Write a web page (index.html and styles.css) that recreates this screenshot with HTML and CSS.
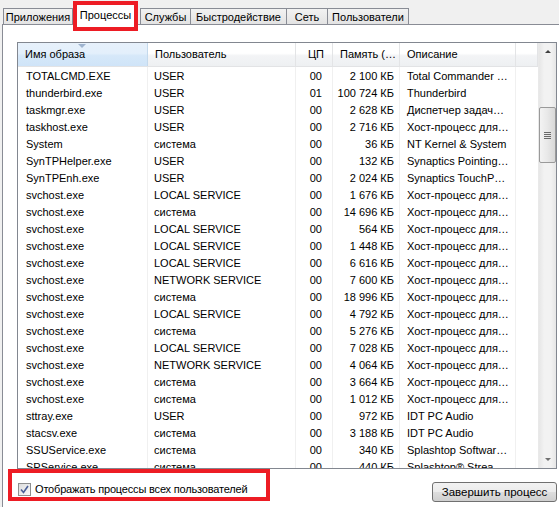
FILE: index.html
```html
<!DOCTYPE html>
<html lang="ru">
<head>
<meta charset="utf-8">
<link rel="stylesheet" href="styles.css">
</head>
<body>
<div class="window">
  <div class="tabs">
    <div class="tab t-apps">Приложения</div>
    <div class="tab active">Процессы<span class="mark mark-tab"></span></div>
    <div class="tab t-svc">Службы</div>
    <div class="tab t-perf">Быстродействие</div>
    <div class="tab t-net">Сеть</div>
    <div class="tab t-users">Пользователи</div>
  </div>
  <div class="panel">
    <div class="listbox">
      <div class="list-main">
        <div class="header">
          <div class="hcell c1 sorted"><span class="sort-arrow"></span>Имя образа</div>
          <div class="hcell c2">Пользователь</div>
          <div class="hcell c3 right">ЦП</div>
          <div class="hcell c4">Память (…</div>
          <div class="hcell c5">Описание</div>
          <div class="hcell c6"></div>
        </div>
        <div class="rows">
          <div class="row"><span class="c1">TOTALCMD.EXE</span><span class="c2">USER</span><span class="c3">00</span><span class="c4">2 100 КБ</span><span class="c5">Total Commander …</span><span class="c6"></span></div>
          <div class="row"><span class="c1">thunderbird.exe</span><span class="c2">USER</span><span class="c3">01</span><span class="c4">100 724 КБ</span><span class="c5">Thunderbird</span><span class="c6"></span></div>
          <div class="row"><span class="c1">taskmgr.exe</span><span class="c2">USER</span><span class="c3">00</span><span class="c4">2 628 КБ</span><span class="c5">Диспетчер задач…</span><span class="c6"></span></div>
          <div class="row"><span class="c1">taskhost.exe</span><span class="c2">USER</span><span class="c3">00</span><span class="c4">2 716 КБ</span><span class="c5">Хост-процесс для…</span><span class="c6"></span></div>
          <div class="row"><span class="c1">System</span><span class="c2">система</span><span class="c3">00</span><span class="c4">36 КБ</span><span class="c5">NT Kernel &amp; System</span><span class="c6"></span></div>
          <div class="row"><span class="c1">SynTPHelper.exe</span><span class="c2">USER</span><span class="c3">00</span><span class="c4">132 КБ</span><span class="c5">Synaptics Pointing…</span><span class="c6"></span></div>
          <div class="row"><span class="c1">SynTPEnh.exe</span><span class="c2">USER</span><span class="c3">00</span><span class="c4">2 024 КБ</span><span class="c5">Synaptics TouchP…</span><span class="c6"></span></div>
          <div class="row"><span class="c1">svchost.exe</span><span class="c2">LOCAL SERVICE</span><span class="c3">00</span><span class="c4">1 676 КБ</span><span class="c5">Хост-процесс для…</span><span class="c6"></span></div>
          <div class="row"><span class="c1">svchost.exe</span><span class="c2">система</span><span class="c3">00</span><span class="c4">14 696 КБ</span><span class="c5">Хост-процесс для…</span><span class="c6"></span></div>
          <div class="row"><span class="c1">svchost.exe</span><span class="c2">LOCAL SERVICE</span><span class="c3">00</span><span class="c4">564 КБ</span><span class="c5">Хост-процесс для…</span><span class="c6"></span></div>
          <div class="row"><span class="c1">svchost.exe</span><span class="c2">LOCAL SERVICE</span><span class="c3">00</span><span class="c4">1 448 КБ</span><span class="c5">Хост-процесс для…</span><span class="c6"></span></div>
          <div class="row"><span class="c1">svchost.exe</span><span class="c2">LOCAL SERVICE</span><span class="c3">00</span><span class="c4">6 616 КБ</span><span class="c5">Хост-процесс для…</span><span class="c6"></span></div>
          <div class="row"><span class="c1">svchost.exe</span><span class="c2">NETWORK SERVICE</span><span class="c3">00</span><span class="c4">7 600 КБ</span><span class="c5">Хост-процесс для…</span><span class="c6"></span></div>
          <div class="row"><span class="c1">svchost.exe</span><span class="c2">система</span><span class="c3">00</span><span class="c4">18 996 КБ</span><span class="c5">Хост-процесс для…</span><span class="c6"></span></div>
          <div class="row"><span class="c1">svchost.exe</span><span class="c2">LOCAL SERVICE</span><span class="c3">00</span><span class="c4">4 792 КБ</span><span class="c5">Хост-процесс для…</span><span class="c6"></span></div>
          <div class="row"><span class="c1">svchost.exe</span><span class="c2">система</span><span class="c3">00</span><span class="c4">5 276 КБ</span><span class="c5">Хост-процесс для…</span><span class="c6"></span></div>
          <div class="row"><span class="c1">svchost.exe</span><span class="c2">LOCAL SERVICE</span><span class="c3">00</span><span class="c4">7 028 КБ</span><span class="c5">Хост-процесс для…</span><span class="c6"></span></div>
          <div class="row"><span class="c1">svchost.exe</span><span class="c2">NETWORK SERVICE</span><span class="c3">00</span><span class="c4">4 064 КБ</span><span class="c5">Хост-процесс для…</span><span class="c6"></span></div>
          <div class="row"><span class="c1">svchost.exe</span><span class="c2">система</span><span class="c3">00</span><span class="c4">3 664 КБ</span><span class="c5">Хост-процесс для…</span><span class="c6"></span></div>
          <div class="row"><span class="c1">svchost.exe</span><span class="c2">система</span><span class="c3">00</span><span class="c4">1 012 КБ</span><span class="c5">Хост-процесс для…</span><span class="c6"></span></div>
          <div class="row"><span class="c1">sttray.exe</span><span class="c2">USER</span><span class="c3">00</span><span class="c4">972 КБ</span><span class="c5">IDT PC Audio</span><span class="c6"></span></div>
          <div class="row"><span class="c1">stacsv.exe</span><span class="c2">система</span><span class="c3">00</span><span class="c4">3 188 КБ</span><span class="c5">IDT PC Audio</span><span class="c6"></span></div>
          <div class="row"><span class="c1">SSUService.exe</span><span class="c2">система</span><span class="c3">00</span><span class="c4">340 КБ</span><span class="c5">Splashtop Softwar…</span><span class="c6"></span></div>
          <div class="row"><span class="c1">SPService.exe</span><span class="c2">система</span><span class="c3">00</span><span class="c4">440 КБ</span><span class="c5">Splashtop® Strea…</span><span class="c6"></span></div>
        </div>
      </div>
      <div class="scrollbar">
        <div class="sb-btn"><span class="tri-up"></span></div>
        <div class="sb-track">
          <div class="sb-thumb"><span class="grip"></span></div>
        </div>
        <div class="sb-btn"><span class="tri-down"></span></div>
      </div>
    </div>
    <div class="footer">
      <label class="check">
        <span class="box"><svg width="9" height="9" viewBox="0 0 9 9"><path d="M1 4.5 L3.5 7.5 L8 1" fill="none" stroke="#4a5f97" stroke-width="1.6"/></svg></span>
        Отображать процессы всех пользователей
      </label>
      <button class="btn">Завершить процесс</button>
    </div>
  </div>
  <div class="mark mark-check"></div>
</div>
</body>
</html>
```

FILE: styles.css
```css
html, body {
  margin: 0;
  padding: 0;
}
body {
  background: #f0f0f0;
  font-family: "Liberation Sans", Arial, sans-serif;
  font-size: 11px;
  color: #000;
  overflow: hidden;
  width: 559px;
  height: 507px;
}
.window {
  position: relative;
  width: 559px;
  height: 507px;
  overflow: hidden;
}
.tabs {
  display: flex;
  align-items: flex-end;
  height: 24px;
  padding-left: 3px;
  position: relative;
  z-index: 2;
}
.tab {
  height: 16px;
  line-height: 16px;
  padding: 0;
  margin-right: -1px;
  border: 1px solid #898c95;
  border-bottom: none;
  background: linear-gradient(#f2f2f2, #e3e3e3);
  font-size: 11px;
  white-space: nowrap;
  text-align: center;
  box-sizing: border-box;
}
.t-apps { width: 70px; }
.t-svc { width: 51px; }
.t-perf { width: 97px; }
.t-net { width: 42px; }
.t-users { width: 82px; }
.tab.active {
  width: 63px;
  height: 21px;
  line-height: 20px;
  background: #fff;
  margin: 0 3px -1px 2px;
  position: relative;
  z-index: 3;
}
.panel {
  background: #fff;
  border: 1px solid #898c95;
  margin-left: 2px;
  width: 600px;
  height: 520px;
  padding: 17px 0 0 14px;
  box-sizing: border-box;
}
.listbox {
  display: flex;
  width: 540px;
  height: 427px;
  border: 1px solid #828790;
  box-sizing: border-box;
  overflow: hidden;
}
.list-main {
  width: 520px;
  overflow: hidden;
}
.header {
  display: flex;
  height: 23px;
  background: linear-gradient(#ffffff 0%, #ffffff 45%, #f3f4f6 55%, #eef0f2 100%);
  border-bottom: 1px solid #e2e3e5;
}
.hcell {
  line-height: 23px;
  padding-left: 7px;
  box-sizing: border-box;
  border-right: 1px solid #e3e4e6;
  white-space: nowrap;
  overflow: hidden;
  position: relative;
}
.hcell.right {
  text-align: right;
  padding-left: 0;
  padding-right: 8px;
}
.hcell.sorted {
  background: linear-gradient(#e7f1fb 0%, #e3effb 45%, #d6e8f9 55%, #cfe4f8 100%);
  border-right-color: #c4d9ec;
}
.sort-arrow {
  position: absolute;
  left: 60px;
  top: 1px;
  width: 0;
  height: 0;
  border-left: 4px solid transparent;
  border-right: 4px solid transparent;
  border-top: 4px solid #9fb4cf;
}
.c1 { width: 130px; }
.c2 { width: 148px; }
.c3 { width: 37px; }
.c4 { width: 67px; }
.c5 { width: 116px; }
.c6 { width: 22px; }
.rows {
  padding-top: 1px;
  background:
    linear-gradient(#f0f0f0, #f0f0f0) 129px 0 / 1px 100% no-repeat,
    linear-gradient(#f0f0f0, #f0f0f0) 277px 0 / 1px 100% no-repeat,
    linear-gradient(#f0f0f0, #f0f0f0) 314px 0 / 1px 100% no-repeat,
    linear-gradient(#f0f0f0, #f0f0f0) 381px 0 / 1px 100% no-repeat,
    linear-gradient(#f0f0f0, #f0f0f0) 497px 0 / 1px 100% no-repeat;
}
.row {
  display: flex;
  height: 17px;
  line-height: 17px;
}
.row span {
  display: block;
  box-sizing: border-box;
  white-space: nowrap;
  overflow: hidden;
}
.row .c1 { padding-left: 8px; }
.row .c2 { padding-left: 6px; }
.row .c3 { text-align: right; padding-right: 11px; }
.row .c4 { text-align: right; padding-right: 6px; }
.row .c5 { padding-left: 7px; }
.scrollbar {
  width: 18px;
  display: flex;
  flex-direction: column;
  background: linear-gradient(90deg, #e6e6e6, #f2f2f2 30%, #f2f2f2 70%, #e6e6e6);
  border-left: 1px solid #e9e9e9;
  box-sizing: border-box;
}
.sb-btn {
  height: 17px;
  display: flex;
  align-items: center;
  justify-content: center;
}
.tri-up, .tri-down {
  width: 0;
  height: 0;
  border-left: 3px solid transparent;
  border-right: 3px solid transparent;
}
.tri-up { border-bottom: 3px solid #404040; }
.tri-down { border-top: 3px solid #707070; }
.sb-track {
  flex: 1;
  padding-top: 47px;
}
.sb-thumb {
  height: 56px;
  border: 1px solid #9a9a9a;
  border-radius: 2px;
  background: linear-gradient(90deg, #f3f3f3, #e8e8e8 50%, #d8d8d8);
  display: flex;
  align-items: center;
  justify-content: center;
  box-sizing: border-box;
}
.grip {
  width: 7px;
  height: 7px;
  background: repeating-linear-gradient(#6a6a6a 0 1px, transparent 1px 2px);
}
.footer {
  display: flex;
  justify-content: space-between;
  align-items: center;
  width: 540px;
  height: 38px;
}
.check {
  display: flex;
  align-items: center;
  gap: 4px;
  padding-left: 1px;
  font-size: 11px;
  letter-spacing: -0.18px;
  margin-top: 2px;
}
.box {
  width: 11px;
  height: 11px;
  border: 1px solid #8e8f8f;
  background: linear-gradient(135deg, #dcdcdc, #fafafa);
  display: flex;
  align-items: center;
  justify-content: center;
}
.btn {
  width: 125px;
  height: 20px;
  margin-top: 8px;
  font-family: inherit;
  font-size: 11.5px;
  border: 1px solid #707070;
  border-radius: 3px;
  background: linear-gradient(#f2f2f2 0%, #ebebeb 50%, #dddddd 51%, #cfcfcf 100%);
  padding: 0;
  color: #000;
}
.mark {
  position: absolute;
  border: 4px solid #ed1c24;
  box-sizing: border-box;
  z-index: 5;
}
.mark-tab {
  left: -2px;
  right: -2px;
  top: -4px;
  bottom: -6px;
}
.mark-check {
  left: 8px;
  top: 469px;
  width: 262px;
  height: 32px;
}
```
